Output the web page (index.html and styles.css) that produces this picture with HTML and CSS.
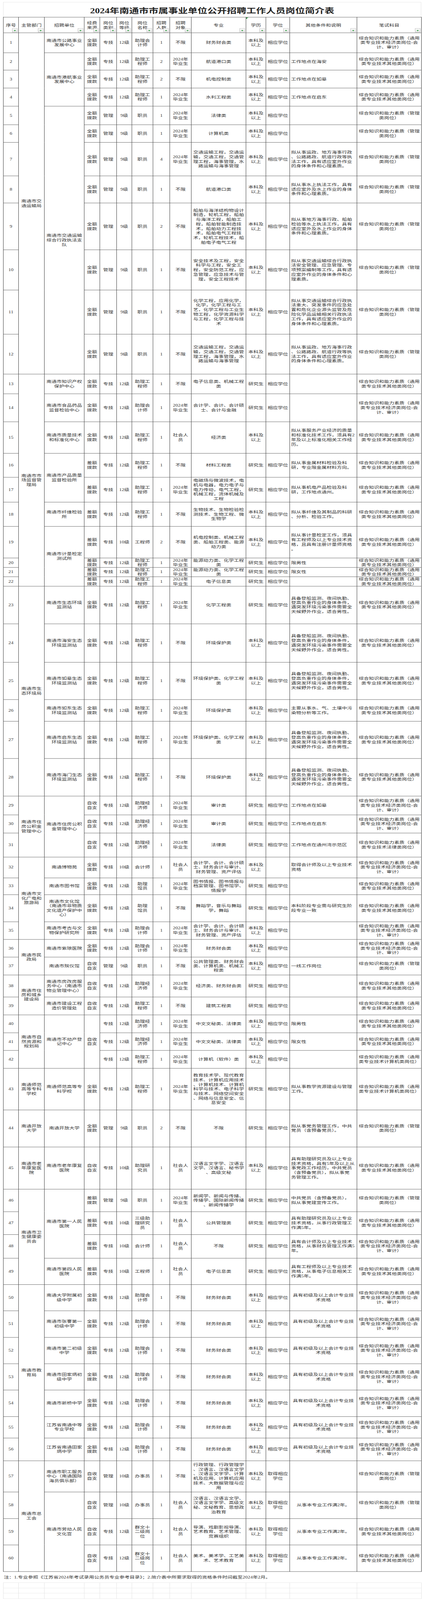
FILE: index.html
```html
<!DOCTYPE html>
<html lang="zh-CN">
<head>
<meta charset="utf-8">
<title>2024年南通市市属事业单位公开招聘工作人员岗位简介表</title>
<link rel="stylesheet" href="styles.css">
</head>
<body>
<div class="viewport">
<div class="page">
<div class="title">2024年南通市市属事业单位公开招聘工作人员岗位简介表</div>
<table class="grid">
<colgroup>
<col class="c1"><col class="c2"><col class="c3"><col class="c4"><col class="c5"><col class="c6"><col class="c7"><col class="c8"><col class="c9"><col class="c10"><col class="c11"><col class="c12"><col class="c13"><col class="c14">
</colgroup>
<thead>
<tr>
<th>序号<span class="flt"></span></th>
<th>主管部门<span class="flt"></span></th>
<th>招聘单位<span class="flt"></span></th>
<th>经费<br>来源<span class="flt"></span></th>
<th>岗位<br>类别<span class="flt"></span></th>
<th>岗位<br>等级<span class="flt"></span></th>
<th>岗位<br>名称<span class="flt"></span></th>
<th>招聘<br>人数<span class="flt"></span></th>
<th>招聘<br>对象<span class="flt"></span></th>
<th>专业<span class="flt"></span></th>
<th><span class="cmt"></span>学历<span class="flt"></span></th>
<th>学位<span class="flt"></span></th>
<th>其他条件和说明<span class="flt"></span></th>
<th>笔试科目<span class="flt"></span></th>
</tr>
</thead>
<tbody>
<tr><td>1</td><td rowspan="12">南通市交<br>通运输局</td><td>南通市公路事业<br>发展中心</td><td>全额<br>拨款</td><td>专技</td><td>12级</td><td>助理会<br>计师</td><td>1</td><td>不限</td><td>财务财会类</td><td>本科及<br>以上</td><td>相应学位</td><td class="l"></td><td>综合知识和能力素质（通用<br>类专业技术经济类岗位-会<br>计、审计）</td></tr>
<tr><td>2</td><td rowspan="3">南通市港航事业<br>发展中心</td><td>全额<br>拨款</td><td>专技</td><td>12级</td><td>助理工<br>程师</td><td>2</td><td>2024年<br>毕业生</td><td>航道港口类</td><td>本科及<br>以上</td><td>相应学位</td><td class="l">工作地点在海安</td><td>综合知识和能力素质（通用<br>类专业技术其他类岗位）</td></tr>
<tr><td>3</td><td>全额<br>拨款</td><td>专技</td><td>12级</td><td>助理工<br>程师</td><td>2</td><td>不限</td><td>机电控制类</td><td>本科及<br>以上</td><td>相应学位</td><td class="l">工作地点在如皋</td><td>综合知识和能力素质（通用<br>类专业技术其他类岗位）</td></tr>
<tr><td>4</td><td>全额<br>拨款</td><td>专技</td><td>12级</td><td>助理工<br>程师</td><td>1</td><td>2024年<br>毕业生</td><td>水利工程类</td><td>本科及<br>以上</td><td>相应学位</td><td class="l">工作地点在启东</td><td>综合知识和能力素质（通用<br>类专业技术其他类岗位）</td></tr>
<tr><td>5</td><td rowspan="8">南通市交通运输<br>综合行政执法支<br>队</td><td>全额<br>拨款</td><td>管理</td><td>9级</td><td>职员</td><td>1</td><td>2024年<br>毕业生</td><td>法律类</td><td>本科及<br>以上</td><td>相应学位</td><td class="l"></td><td>综合知识和能力素质（管理<br>类岗位）</td></tr>
<tr><td>6</td><td>全额<br>拨款</td><td>管理</td><td>9级</td><td>职员</td><td>1</td><td>2024年<br>毕业生</td><td>计算机类</td><td>本科及<br>以上</td><td>相应学位</td><td class="l"></td><td>综合知识和能力素质（管理<br>类岗位）</td></tr>
<tr><td>7</td><td>全额<br>拨款</td><td>管理</td><td>9级</td><td>职员</td><td>4</td><td>2024年<br>毕业生</td><td>交通运输工程，交通运<br>输，交通工程，交通管<br>理工程，海事管理，水<br>路运输与海事管理</td><td>本科及<br>以上</td><td>相应学位</td><td class="l">拟从事运政、地方海事行政<br>、公路路政、航道行政等执<br>法工作，具有适应室外作业<br>的身体条件和心理素质。</td><td>综合知识和能力素质（管理<br>类岗位）</td></tr>
<tr><td>8</td><td>全额<br>拨款</td><td>管理</td><td>9级</td><td>职员</td><td>1</td><td>不限</td><td>航道港口类</td><td>本科及<br>以上</td><td>相应学位</td><td class="l">拟从事水上执法工作，具有<br>适应室外及水上作业的身体<br>条件和心理素质。</td><td>综合知识和能力素质（管理<br>类岗位）</td></tr>
<tr><td>9</td><td>全额<br>拨款</td><td>管理</td><td>9级</td><td>职员</td><td>2</td><td>不限</td><td>船舶与海洋结构物设计<br>制造，轮机工程，船舶<br>与海洋工程，船舶工<br>程，船舶智能制造技<br>术，船舶动力工程技<br>术，船舶电气工程技<br>术，轮机工程技术，船<br>舶电子电气工程</td><td>本科及<br>以上</td><td>相应学位</td><td class="l">拟从事地方海事行政、船舶<br>检验等水上执法工作，具有<br>适应室外及水上作业的身体<br>条件和心理素质。</td><td>综合知识和能力素质（管理<br>类岗位）</td></tr>
<tr><td>10</td><td>全额<br>拨款</td><td>管理</td><td>9级</td><td>职员</td><td>1</td><td>不限</td><td>安全技术及工程，安全<br>科学与工程，安全工<br>程，安全防范工程，应<br>急管理，应急技术与管<br>理，安全工程技术</td><td>本科及<br>以上</td><td>相应学位</td><td class="l">拟从事交通运输综合行政执<br>法安全管理、应急管理、专<br>项预案编制等工作，具有适<br>应室外作业的身体条件和心<br>理素质。</td><td>综合知识和能力素质（管理<br>类岗位）</td></tr>
<tr><td>11</td><td>全额<br>拨款</td><td>管理</td><td>9级</td><td>职员</td><td>1</td><td>不限</td><td>化学工程，应用化学，<br>化学，化学工程与工<br>艺，化学工程与工业生<br>物工程，化学资源科学<br>与工程，化学工程与技<br>术</td><td>本科及<br>以上</td><td>相应学位</td><td class="l">拟从事交通运输综合行政执<br>法重大、突发事件的应急处<br>置和危化企业源头监管及危<br>险化学品运输相关行政执法<br>工作，具有适应室外作业的<br>身体条件和心理素质。</td><td>综合知识和能力素质（管理<br>类岗位）</td></tr>
<tr><td>12</td><td>全额<br>拨款</td><td>管理</td><td>9级</td><td>职员</td><td>1</td><td>不限</td><td>交通运输工程，交通运<br>输，交通工程，交通管<br>理工程，海事管理，水<br>路运输与海事管理</td><td>本科及<br>以上</td><td>相应学位</td><td class="l">拟从事运政、地方海事行政<br>、公路路政、航道行政等执<br>法工作，具有适应室外作业<br>的身体条件和心理素质。</td><td>综合知识和能力素质（管理<br>类岗位）</td></tr>
<tr><td>13</td><td rowspan="10">南通市市<br>场监督管<br>理局</td><td>南通市知识产权<br>保护中心</td><td>全额<br>拨款</td><td>专技</td><td>12级</td><td>助理工<br>程师</td><td>1</td><td>不限</td><td>电子信息类、机械工程<br>类</td><td>研究生</td><td>相应学位</td><td class="l"></td><td>综合知识和能力素质（通用<br>类专业技术其他类岗位）</td></tr>
<tr><td>14</td><td>南通市食品药品<br>监督检验中心</td><td>全额<br>拨款</td><td>专技</td><td>12级</td><td>助理会<br>计师</td><td>1</td><td>2024年<br>毕业生</td><td>会计学、会计、会计硕<br>士、会计与金融</td><td>研究生</td><td>相应学位</td><td class="l"></td><td>综合知识和能力素质（通用<br>类专业技术经济类岗位-会<br>计、审计）</td></tr>
<tr><td>15</td><td>南通市质量技术<br>和标准化中心</td><td>全额<br>拨款</td><td>专技</td><td>12级</td><td>助理工<br>程师</td><td>1</td><td>社会人<br>员</td><td>经济类</td><td>本科及<br>以上</td><td></td><td class="l">拟从事服务产业经济的质量<br>和标准化技术工作，须具有2<br>年及以上标准化相关工作经<br>历。</td><td>综合知识和能力素质（通用<br>类专业技术其他类岗位）</td></tr>
<tr><td>16</td><td rowspan="2">南通市产品质量<br>监督检验所</td><td>差额<br>拨款</td><td>专技</td><td>12级</td><td>助理工<br>程师</td><td>1</td><td>不限</td><td>材料工程类</td><td>研究生</td><td>相应学位</td><td class="l">拟从事金属材料检验及科<br>研，专业限金属材料方向。</td><td>综合知识和能力素质（通用<br>类专业技术其他类岗位）</td></tr>
<tr><td>17</td><td>差额<br>拨款</td><td>专技</td><td>12级</td><td>助理工<br>程师</td><td>1</td><td>2024年<br>毕业生</td><td>电磁场与微波技术，电<br>机与电器，电力电子与<br>电力传动，电气工程，<br>机械工程，流体机械及<br>工程</td><td>研究生</td><td>相应学位</td><td class="l">拟从事机电产品检验及科<br>研，工作地点通州。</td><td>综合知识和能力素质（通用<br>类专业技术其他类岗位）</td></tr>
<tr><td>18</td><td>南通市纤维检验<br>所</td><td>差额<br>拨款</td><td>专技</td><td>12级</td><td>助理工<br>程师</td><td>1</td><td>不限</td><td>生物技术、生物检验检<br>测技术、生物工程、微<br>生物学</td><td>本科及<br>以上</td><td>相应学位</td><td class="l">拟从事纤维及其制品的科研<br>、分析、检验工作。</td><td>综合知识和能力素质（通用<br>类专业技术其他类岗位）</td></tr>
<tr><td>19</td><td rowspan="4">南通市计量检定<br>测试所</td><td>差额<br>拨款</td><td>专技</td><td>10级</td><td>工程师</td><td>2</td><td>不限</td><td>机电控制类、机械工程<br>类、船舶工程类、能源<br>动力类</td><td>本科及<br>以上</td><td>相应学位</td><td class="l">拟从事计量检定工作，须具<br>有工程师及以上专业技术资<br>格，且具有注册计量师资格<br>。</td><td>综合知识和能力素质（通用<br>类专业技术其他类岗位）</td></tr>
<tr><td>20</td><td>差额<br>拨款</td><td>专技</td><td>12级</td><td>助理工<br>程师</td><td>1</td><td>2024年<br>毕业生</td><td>能源动力类、化学工程<br>类</td><td>研究生</td><td>相应学位</td><td class="l">限男性</td><td>综合知识和能力素质（通用<br>类专业技术其他类岗位）</td></tr>
<tr><td>21</td><td>差额<br>拨款</td><td>专技</td><td>12级</td><td>助理工<br>程师</td><td>1</td><td>2024年<br>毕业生</td><td>能源动力类、化学工程<br>类</td><td>研究生</td><td>相应学位</td><td class="l">限女性</td><td>综合知识和能力素质（通用<br>类专业技术其他类岗位）</td></tr>
<tr><td>22</td><td>差额<br>拨款</td><td>专技</td><td>12级</td><td>助理工<br>程师</td><td>1</td><td>2024年<br>毕业生</td><td>电子信息类</td><td>研究生</td><td>相应学位</td><td class="l"></td><td>综合知识和能力素质（通用<br>类专业技术其他类岗位）</td></tr>
<tr><td>23</td><td rowspan="6">南通市生<br>态环境局</td><td>南通市生态环境<br>监测站</td><td>全额<br>拨款</td><td>专技</td><td>12级</td><td>助理工<br>程师</td><td>1</td><td>2024年<br>毕业生</td><td>化学工程类</td><td>研究生</td><td>相应学位</td><td class="l">具备登船监测、夜间执勤、<br>登高负重作业的身体条件，<br>遇突发环境污染事件需要全<br>天候野外作业，适合男性。</td><td>综合知识和能力素质（通用<br>类专业技术其他类岗位）</td></tr>
<tr><td>24</td><td>南通市海安生态<br>环境监测站</td><td>全额<br>拨款</td><td>专技</td><td>12级</td><td>助理工<br>程师</td><td>1</td><td>不限</td><td>环境保护类</td><td>本科及<br>以上</td><td>相应学位</td><td class="l">具备登船监测、夜间执勤、<br>登高负重作业的身体条件，<br>遇突发环境污染事件需要全<br>天候野外作业，适合男性。</td><td>综合知识和能力素质（通用<br>类专业技术其他类岗位）</td></tr>
<tr><td>25</td><td>南通市如皋生态<br>环境监测站</td><td>全额<br>拨款</td><td>专技</td><td>12级</td><td>助理工<br>程师</td><td>1</td><td>不限</td><td>环境保护类、化学工程<br>类</td><td>本科及<br>以上</td><td>相应学位</td><td class="l">具备登船监测、夜间执勤、<br>登高负重作业的身体条件，<br>遇突发环境污染事件需要全<br>天候野外作业，适合男性。</td><td>综合知识和能力素质（通用<br>类专业技术其他类岗位）</td></tr>
<tr><td>26</td><td>南通市如东生态<br>环境监测站</td><td>全额<br>拨款</td><td>专技</td><td>12级</td><td>助理工<br>程师</td><td>1</td><td>2024年<br>毕业生</td><td>环境保护类</td><td>本科及<br>以上</td><td>相应学位</td><td class="l">主要从事水、气、土壤中污<br>染物分析等工作。</td><td>综合知识和能力素质（通用<br>类专业技术其他类岗位）</td></tr>
<tr><td>27</td><td>南通市启东生态<br>环境监测站</td><td>全额<br>拨款</td><td>专技</td><td>12级</td><td>助理工<br>程师</td><td>1</td><td>2024年<br>毕业生</td><td>环境保护类、化学工程<br>类</td><td>本科及<br>以上</td><td>相应学位</td><td class="l">具备登船监测、夜间执勤、<br>登高负重作业的身体条件，<br>遇突发环境污染事件需要全<br>天候野外作业，适合男性。</td><td>综合知识和能力素质（通用<br>类专业技术其他类岗位）</td></tr>
<tr><td>28</td><td>南通市海门生态<br>环境监测站</td><td>全额<br>拨款</td><td>专技</td><td>12级</td><td>助理工<br>程师</td><td>1</td><td>不限</td><td>环境保护类</td><td>本科及<br>以上</td><td>相应学位</td><td class="l">具备登船监测、夜间执勤、<br>登高负重作业的身体条件，<br>遇突发环境污染事件需要全<br>天候野外作业，适合男性。</td><td>综合知识和能力素质（通用<br>类专业技术其他类岗位）</td></tr>
<tr><td>29</td><td rowspan="3">南通市住<br>房公积金<br>管理中心</td><td rowspan="3">南通市住房公积<br>金管理中心</td><td>自收<br>自支</td><td>专技</td><td>12级</td><td>助理经<br>济师</td><td>1</td><td>2024年<br>毕业生</td><td>审计类</td><td>研究生</td><td>相应学位</td><td class="l">工作地点在如皋</td><td>综合知识和能力素质（通用<br>类专业技术经济类岗位-会<br>计、审计）</td></tr>
<tr><td>30</td><td>自收<br>自支</td><td>专技</td><td>12级</td><td>助理经<br>济师</td><td>1</td><td>2024年<br>毕业生</td><td>审计类</td><td>研究生</td><td>相应学位</td><td class="l">工作地点在启东</td><td>综合知识和能力素质（通用<br>类专业技术经济类岗位-会<br>计、审计）</td></tr>
<tr><td>31</td><td>自收<br>自支</td><td>专技</td><td>12级</td><td>助理经<br>济师</td><td>1</td><td>2024年<br>毕业生</td><td>法律类</td><td>研究生</td><td>相应学位</td><td class="l">工作地点在通州湾示范区</td><td>综合知识和能力素质（通用<br>类专业技术法律类岗位）</td></tr>
<tr><td>32</td><td rowspan="4">南通市文<br>化广电和<br>旅游局</td><td>南通博物苑</td><td>全额<br>拨款</td><td>专技</td><td>10级</td><td>会计师</td><td>1</td><td>社会人<br>员</td><td>会计学、会计、会计硕<br>士、财务会计与审计、<br>财务管理、资产评估</td><td>本科及<br>以上</td><td></td><td class="l">取得会计师及以上专业技术<br>资格</td><td>综合知识和能力素质（通用<br>类专业技术经济类岗位-会<br>计、审计）</td></tr>
<tr><td>33</td><td>南通市图书馆</td><td>全额<br>拨款</td><td>专技</td><td>12级</td><td>助理<br>馆员</td><td>1</td><td>2024年<br>毕业生</td><td>图书情报、图书情报与<br>档案管理、图书馆学、<br>情报学</td><td>研究生</td><td>相应学位</td><td class="l"></td><td>综合知识和能力素质（通用<br>类专业技术其他类岗位）</td></tr>
<tr><td>34</td><td>南通市文化馆<br>（南通市非物质<br>文化遗产保护中<br>心）</td><td>全额<br>拨款</td><td>专技</td><td>12级</td><td>助理<br>馆员</td><td>1</td><td>不限</td><td>舞蹈学，音乐与舞蹈<br>学，舞蹈</td><td>研究生</td><td>相应学位</td><td class="l">本科阶段专业需与研究生阶<br>段专业一致</td><td>综合知识和能力素质（通用<br>类专业技术其他类岗位）</td></tr>
<tr><td>35</td><td>南通市考古与文<br>物保护研究所</td><td>全额<br>拨款</td><td>专技</td><td>12级</td><td>助理会<br>计师</td><td>1</td><td>2024年<br>毕业生</td><td>会计学、会计、会计硕<br>士、财务会计与审计、<br>财务管理、资产评估</td><td>本科及<br>以上</td><td>相应学位</td><td class="l"></td><td>综合知识和能力素质（通用<br>类专业技术经济类岗位-会<br>计、审计）</td></tr>
<tr><td>36</td><td rowspan="2">南通市民<br>政局</td><td>南通市紫琅医院</td><td>全额<br>拨款</td><td>专技</td><td>12级</td><td>助理会<br>计师</td><td>1</td><td>2024年<br>毕业生</td><td>财务财会类</td><td>本科及<br>以上</td><td>相应学位</td><td class="l"></td><td>综合知识和能力素质（通用<br>类专业技术经济类岗位-会<br>计、审计）</td></tr>
<tr><td>37</td><td>南通市殡仪馆</td><td>自收<br>自支</td><td>管理</td><td>9级</td><td>职员</td><td>1</td><td>不限</td><td>公共管理类、财务财会<br>类、计算机类、机械工<br>程类</td><td>本科及<br>以上</td><td>相应学位</td><td class="l">一线工作岗位</td><td>综合知识和能力素质（管理<br>类岗位）</td></tr>
<tr><td>38</td><td rowspan="2">南通市住<br>房和城乡<br>建设局</td><td>南通市房改房服<br>务中心（南通市<br>物业管理中心）</td><td>自收<br>自支</td><td>专技</td><td>12级</td><td>助理经<br>济师</td><td>1</td><td>2024年<br>毕业生</td><td>经济类、财务财会类</td><td>研究生</td><td>相应学位</td><td class="l"></td><td>综合知识和能力素质（通用<br>类专业技术其他类岗位）</td></tr>
<tr><td>39</td><td>南通市建设工程<br>造价管理处</td><td>自收<br>自支</td><td>专技</td><td>12级</td><td>助理工<br>程师</td><td>1</td><td>不限</td><td>建筑工程类</td><td>研究生</td><td>相应学位</td><td class="l"></td><td>综合知识和能力素质（通用<br>类专业技术其他类岗位）</td></tr>
<tr><td>40</td><td rowspan="3">南通市自<br>然资源和<br>规划局</td><td rowspan="3">南通市不动产登<br>记中心</td><td rowspan="3">自收<br>自支</td><td>专技</td><td>12级</td><td>助理经<br>济师</td><td>1</td><td>2024年<br>毕业生</td><td>中文文秘类、法律类</td><td>本科及<br>以上</td><td>相应学位</td><td class="l">限男性</td><td>综合知识和能力素质（通用<br>类专业技术其他类岗位）</td></tr>
<tr><td>41</td><td>专技</td><td>12级</td><td>助理经<br>济师</td><td>1</td><td>2024年<br>毕业生</td><td>中文文秘类、法律类</td><td>本科及<br>以上</td><td>相应学位</td><td class="l">限女性</td><td>综合知识和能力素质（通用<br>类专业技术其他类岗位）</td></tr>
<tr><td>42</td><td>专技</td><td>12级</td><td>助理工<br>程师</td><td>1</td><td>2024年<br>毕业生</td><td>计算机（软件）类</td><td>本科及<br>以上</td><td>相应学位</td><td class="l"></td><td>综合知识和能力素质（通用<br>类专业技术计算机类岗位）</td></tr>
<tr><td>43</td><td>南通师范<br>高等专科<br>学校</td><td>南通师范高等专<br>科学校</td><td>全额<br>拨款</td><td>专技</td><td>12级</td><td>助理工<br>程师</td><td>1</td><td>2024年<br>毕业生</td><td>教育技术学、现代教育<br>技术、计算机应用技术<br>、计算机技术、计算机<br>科学与技术、电子科学<br>与技术、网络空间安全<br>、网络与信息安全、信<br>息安全</td><td>研究生</td><td>相应学位</td><td class="l">拟从事教学资源建设与管理<br>工作。</td><td>综合知识和能力素质（通用<br>类专业技术计算机类岗位）</td></tr>
<tr><td>44</td><td>南通开放<br>大学</td><td>南通开放大学</td><td>全额<br>拨款</td><td>管理</td><td>9级</td><td>职员</td><td>2</td><td>不限</td><td>不限</td><td>研究生</td><td>相应学位</td><td class="l">拟从事党务管理工作，中共<br>党员（含预备党员）。</td><td>综合知识和能力素质（管理<br>类岗位）</td></tr>
<tr><td>45</td><td>南通市老<br>年康复医<br>院</td><td>南通市老年康复<br>医院</td><td>自收<br>自支</td><td>专技</td><td>10级</td><td>助理研<br>究员</td><td>1</td><td>社会人<br>员</td><td>汉语言文字学、汉语言<br>文学、汉语言、秘书学<br>、高级文秘</td><td>本科及<br>以上</td><td>相应学位</td><td class="l">具有助理研究员及以上专业<br>技术资格，具有5年及以上从<br>事党政工作经历，中共党员<br>（含预备党员），拟从事党<br>务管理工作。</td><td>综合知识和能力素质（通用<br>类专业技术其他类岗位）</td></tr>
<tr><td>46</td><td rowspan="4">南通市卫<br>生健康委<br>员会</td><td rowspan="3">南通市第一人民<br>医院</td><td>差额<br>拨款</td><td>管理</td><td>9级</td><td>职员</td><td>1</td><td>2024年<br>毕业生</td><td>新闻学、新闻与传播、<br>传播学、国际新闻传播<br>、新闻传播学</td><td>研究生</td><td>相应学位</td><td class="l">中共党员（含预备党员），<br>拟从事党建宣传工作。</td><td>综合知识和能力素质（管理<br>类岗位）</td></tr>
<tr><td>47</td><td>差额<br>拨款</td><td>专技</td><td>10级</td><td>三级助<br>理研究<br>员</td><td>1</td><td>社会人<br>员</td><td>公共管理类</td><td>研究生</td><td>相应学位</td><td class="l">具有助理研究员及以上专业<br>技术资格，从事行政管理工<br>作满5年。</td><td>综合知识和能力素质（通用<br>类专业技术其他类岗位）</td></tr>
<tr><td>48</td><td>差额<br>拨款</td><td>专技</td><td>10级</td><td>会计师</td><td>1</td><td>社会人<br>员</td><td>不限</td><td>研究生</td><td>相应学位</td><td class="l">具有会计师及以上专业技术<br>资格，从事财务管理工作满5<br>年。</td><td>综合知识和能力素质（通用<br>类专业技术经济类岗位-会<br>计、审计）</td></tr>
<tr><td>49</td><td>南通市第四人民<br>医院</td><td>差额<br>拨款</td><td>专技</td><td>10级</td><td>工程师</td><td>1</td><td>社会人<br>员</td><td>电子信息类</td><td>研究生</td><td>相应学位</td><td class="l">具有工程师及以上专业技术<br>资格，从事电子信息相关工<br>作满5年。</td><td>综合知识和能力素质（通用<br>类专业技术其他类岗位）</td></tr>
<tr><td>50</td><td rowspan="7">南通市教<br>育局</td><td>南通大学附属初<br>级中学</td><td>全额<br>拨款</td><td>专技</td><td>12级</td><td>助理会<br>计师</td><td>1</td><td>不限</td><td>财务财会类</td><td>本科及<br>以上</td><td>相应学位</td><td>具有初级及以上会计专业技<br>术资格</td><td>综合知识和能力素质（通用<br>类专业技术经济类岗位-会<br>计、审计）</td></tr>
<tr><td>51</td><td>南通市张謇第一<br>初级中学</td><td>全额<br>拨款</td><td>专技</td><td>12级</td><td>助理会<br>计师</td><td>1</td><td>不限</td><td>财务财会类</td><td>本科及<br>以上</td><td>相应学位</td><td>具有初级及以上会计专业技<br>术资格</td><td>综合知识和能力素质（通用<br>类专业技术经济类岗位-会<br>计、审计）</td></tr>
<tr><td>52</td><td>南通市第二初级<br>中学</td><td>全额<br>拨款</td><td>专技</td><td>12级</td><td>助理会<br>计师</td><td>1</td><td>不限</td><td>财务财会类</td><td>本科及<br>以上</td><td>相应学位</td><td>具有初级及以上会计专业技<br>术资格</td><td>综合知识和能力素质（通用<br>类专业技术经济类岗位-会<br>计、审计）</td></tr>
<tr><td>53</td><td>南通市田家炳初<br>级中学</td><td>全额<br>拨款</td><td>专技</td><td>12级</td><td>助理会<br>计师</td><td>1</td><td>不限</td><td>财务财会类</td><td>本科及<br>以上</td><td>相应学位</td><td>具有初级及以上会计专业技<br>术资格</td><td>综合知识和能力素质（通用<br>类专业技术经济类岗位-会<br>计、审计）</td></tr>
<tr><td>54</td><td>南通市新桥中学</td><td>全额<br>拨款</td><td>专技</td><td>12级</td><td>助理会<br>计师</td><td>1</td><td>不限</td><td>财务财会类</td><td>本科及<br>以上</td><td>相应学位</td><td>具有初级及以上会计专业技<br>术资格</td><td>综合知识和能力素质（通用<br>类专业技术经济类岗位-会<br>计、审计）</td></tr>
<tr><td>55</td><td>江苏省南通中等<br>专业学校</td><td>全额<br>拨款</td><td>专技</td><td>12级</td><td>助理会<br>计师</td><td>1</td><td>不限</td><td>财务财会类</td><td>本科及<br>以上</td><td>相应学位</td><td>具有初级及以上会计专业技<br>术资格</td><td>综合知识和能力素质（通用<br>类专业技术经济类岗位-会<br>计、审计）</td></tr>
<tr><td>56</td><td>江苏省南通田家<br>炳中学</td><td>全额<br>拨款</td><td>专技</td><td>12级</td><td>助理会<br>计师</td><td>1</td><td>不限</td><td>财务财会类</td><td>本科及<br>以上</td><td>相应学位</td><td>具有初级及以上会计专业技<br>术资格</td><td>综合知识和能力素质（通用<br>类专业技术经济类岗位-会<br>计、审计）</td></tr>
<tr><td>57</td><td rowspan="4">南通市总<br>工会</td><td>南通市职工服务<br>中心（南通国际<br>海员俱乐部）</td><td>自收<br>自支</td><td>管理</td><td>10级</td><td>办事员</td><td>1</td><td>不限</td><td>行政管理、行政管理学<br>、汉语言、汉语言文学<br>、汉语言文字学、计算<br>机及应用、计算机应用<br>技术、大数据管理与应<br>用</td><td>本科及<br>以上</td><td>取得相应<br>学位</td><td class="l"></td><td>综合知识和能力素质（管理<br>类岗位）</td></tr>
<tr><td>58</td><td rowspan="3">南通市劳动人民<br>文化宫</td><td>自收<br>自支</td><td>管理</td><td>10级</td><td>办事员</td><td>1</td><td>社会人<br>员</td><td>汉语言、汉语言文学、<br>汉语言文字学、高级文<br>秘、文秘教育、思想政<br>治教育</td><td>本科及<br>以上</td><td>取得相应<br>学位</td><td>从事本专业工作满2年。</td><td>综合知识和能力素质（管理<br>类岗位）</td></tr>
<tr><td>59</td><td>自收<br>自支</td><td>专技</td><td>12级</td><td>群文十<br>二级岗<br>位</td><td>1</td><td>社会人<br>员</td><td>导演、戏剧影视导演、<br>艺术教育、艺术管理、<br>竞赛组织</td><td>本科及<br>以上</td><td>取得相应<br>学位</td><td>从事本专业工作满2年。</td><td>综合知识和能力素质（通用<br>类专业技术其他类岗位）</td></tr>
<tr><td>60</td><td>自收<br>自支</td><td>专技</td><td>12级</td><td>群文十<br>二级岗<br>位</td><td>1</td><td>社会人<br>员</td><td>美术、美术学、工艺美<br>术、艺术教育</td><td>本科及<br>以上</td><td>取得相应<br>学位</td><td>从事本专业工作满2年。</td><td>综合知识和能力素质（通用<br>类专业技术其他类岗位）</td></tr>
</tbody>
</table>
<div class="note">注：1.专业参照《江苏省2024年考试录用公务员专业参考目录》；2.简介表中所要求取得的资格条件时间截至2024年2月。</div>
<table class="blank">
<colgroup>
<col class="c1"><col class="c2"><col class="c3"><col class="c4"><col class="c5"><col class="c6"><col class="c7"><col class="c8"><col class="c9"><col class="c10"><col class="c11"><col class="c12"><col class="c13"><col class="c14">
</colgroup>
<tbody>
<tr><td></td><td></td><td></td><td></td><td></td><td></td><td></td><td></td><td></td><td></td><td></td><td></td><td></td><td></td></tr>
<tr><td></td><td></td><td></td><td></td><td></td><td></td><td></td><td></td><td></td><td></td><td></td><td></td><td></td><td></td></tr>
<tr><td></td><td></td><td></td><td></td><td></td><td></td><td></td><td></td><td></td><td></td><td></td><td></td><td></td><td></td></tr>
</tbody>
</table>
</div>
</div>
</body>
</html>
```

FILE: styles.css
```css
* { box-sizing: border-box; }
html, body { margin: 0; padding: 0; background: #fff; }
body {
  font-family: "Liberation Serif", "Noto Sans CJK SC", serif;
  color: #333;
}

/* The sheet is laid out for a 5536px-tall window; when the window is
   shorter, the whole sheet is compressed vertically to fit it. */
.viewport { height: 100vh; overflow: hidden; }
.page { width: 1080px; padding: 7px 2px 0 8px; transform-origin: 0 0; }
@media (max-height: 4200px) {
  .page { transform: scaleY(0.739884); }
}
.page { transform: scaleY(tan(atan2(100vh, 5536px))); }

.title {
  width: 1070px;
  height: 52px;
  padding-top: 15px;
  border: 1px solid #e3e3e3;
  border-bottom: none;
  text-align: center;
  font-size: 25px;
  line-height: 30px;
  font-weight: 700;
  color: #222;
}

.grid, .blank {
  width: 1070px;
  table-layout: fixed;
  border-collapse: collapse;
}
.c1 { width: 39px; }
.c2 { width: 66px; }
.c3 { width: 102px; }
.c4 { width: 40px; }
.c5 { width: 43px; }
.c6 { width: 39px; }
.c7 { width: 54px; }
.c8 { width: 43px; }
.c9 { width: 55px; }
.c10 { width: 140px; }
.c11 { width: 51px; }
.c12 { width: 61px; }
.c13 { width: 172px; }
.c14 { width: 165px; }

.grid { font-size: 13px; line-height: 15.8px; }
.grid th, .grid td {
  border: 1px solid #3a3a3a;
  padding: 0 3px;
  text-align: center;
  vertical-align: middle;
  white-space: nowrap;
  overflow: hidden;
  font-weight: normal;
}
.grid td.l { text-align: left; }
.grid thead th { height: 54px; padding-top: 3px; position: relative; }

.flt {
  position: absolute;
  right: 2px;
  bottom: 1px;
  width: 14px;
  height: 14px;
  border: 1px solid #bcbcbc;
  background: linear-gradient(#ffffff, #e6e6e6);
}
.flt::after {
  content: "";
  position: absolute;
  left: 3px;
  top: 5px;
  border-left: 3.5px solid transparent;
  border-right: 3.5px solid transparent;
  border-top: 4px solid #2e9a3e;
}
.cmt {
  position: absolute;
  left: 0;
  top: 0;
  border-top: 6px solid #1e8e3a;
  border-right: 6px solid transparent;
}

.grid tbody tr:nth-child(1) { height: 69px; }
.grid tbody tr:nth-child(2) { height: 60px; }
.grid tbody tr:nth-child(3) { height: 62px; }
.grid tbody tr:nth-child(4) { height: 63px; }
.grid tbody tr:nth-child(5) { height: 64px; }
.grid tbody tr:nth-child(6) { height: 61px; }
.grid tbody tr:nth-child(7) { height: 116px; }
.grid tbody tr:nth-child(8) { height: 94px; }
.grid tbody tr:nth-child(9) { height: 162px; }
.grid tbody tr:nth-child(10) { height: 139px; }
.grid tbody tr:nth-child(11) { height: 153px; }
.grid tbody tr:nth-child(12) { height: 138px; }
.grid tbody tr:nth-child(13) { height: 68px; }
.grid tbody tr:nth-child(14) { height: 97px; }
.grid tbody tr:nth-child(15) { height: 109px; }
.grid tbody tr:nth-child(16) { height: 83px; }
.grid tbody tr:nth-child(17) { height: 86px; }
.grid tbody tr:nth-child(18) { height: 84px; }
.grid tbody tr:nth-child(19) { height: 109px; }
.grid tbody tr:nth-child(20) { height: 32px; }
.grid tbody tr:nth-child(21) { height: 32px; }
.grid tbody tr:nth-child(22) { height: 32px; }
.grid tbody tr:nth-child(23) { height: 130px; }
.grid tbody tr:nth-child(24) { height: 133px; }
.grid tbody tr:nth-child(25) { height: 129px; }
.grid tbody tr:nth-child(26) { height: 75px; }
.grid tbody tr:nth-child(27) { height: 129px; }
.grid tbody tr:nth-child(28) { height: 130px; }
.grid tbody tr:nth-child(29) { height: 65px; }
.grid tbody tr:nth-child(30) { height: 63px; }
.grid tbody tr:nth-child(31) { height: 83px; }
.grid tbody tr:nth-child(32) { height: 72px; }
.grid tbody tr:nth-child(33) { height: 58px; }
.grid tbody tr:nth-child(34) { height: 94px; }
.grid tbody tr:nth-child(35) { height: 61px; }
.grid tbody tr:nth-child(36) { height: 61px; }
.grid tbody tr:nth-child(37) { height: 62px; }
.grid tbody tr:nth-child(38) { height: 76px; }
.grid tbody tr:nth-child(39) { height: 62px; }
.grid tbody tr:nth-child(40) { height: 62px; }
.grid tbody tr:nth-child(41) { height: 61px; }
.grid tbody tr:nth-child(42) { height: 62px; }
.grid tbody tr:nth-child(43) { height: 144px; }
.grid tbody tr:nth-child(44) { height: 128px; }
.grid tbody tr:nth-child(45) { height: 146px; }
.grid tbody tr:nth-child(46) { height: 78px; }
.grid tbody tr:nth-child(47) { height: 79px; }
.grid tbody tr:nth-child(48) { height: 82px; }
.grid tbody tr:nth-child(49) { height: 91px; }
.grid tbody tr:nth-child(50) { height: 91px; }
.grid tbody tr:nth-child(51) { height: 92px; }
.grid tbody tr:nth-child(52) { height: 91px; }
.grid tbody tr:nth-child(53) { height: 91px; }
.grid tbody tr:nth-child(54) { height: 92px; }
.grid tbody tr:nth-child(55) { height: 74px; }
.grid tbody tr:nth-child(56) { height: 79px; }
.grid tbody tr:nth-child(57) { height: 108px; }
.grid tbody tr:nth-child(58) { height: 92px; }
.grid tbody tr:nth-child(59) { height: 91px; }
.grid tbody tr:nth-child(60) { height: 92px; }

.note {
  width: 1070px;
  height: 38px;
  line-height: 38px;
  padding-left: 2px;
  font-size: 13px;
  white-space: nowrap;
  border-bottom: 1px solid #e4e4e4;
}

.blank td {
  border: 1px solid #e4e4e4;
  border-top: none;
  height: 18.5px;
  padding: 0;
}
```
